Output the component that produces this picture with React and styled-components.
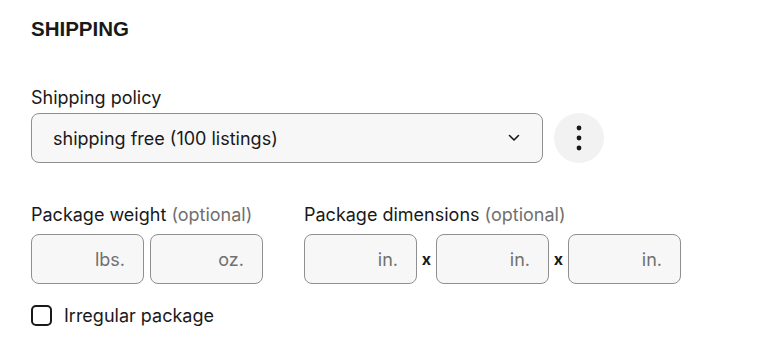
import React from "react";
import styled, { createGlobalStyle } from "styled-components";

const Global = createGlobalStyle`
  html, body { margin: 0; padding: 0; background: #fff; }
  body { font-family: Inter, "Noto Sans", sans-serif; color: #191919; }
  * { box-sizing: border-box; }
`;

const Page = styled.div`
  width: 780px;
  height: 353px;
  padding: 17px 0 0 31px;
  display: flex;
  flex-direction: column;
`;

const Heading = styled.h2`
  margin: 0;
  font-family: "Liberation Sans", Arial, sans-serif;
  font-weight: 700;
  font-size: 20.5px;
  line-height: 24px;
  color: #191919;
`;

const Field = styled.div`
  display: flex;
  flex-direction: column;
  gap: ${(p) => p.$gap || 8}px;
`;

const Label = styled.label`
  font-size: 18px;
  line-height: 22px;
  color: #191919;
`;

const Optional = styled.span`
  color: #707070;
`;

const PolicyRow = styled.div`
  display: flex;
  align-items: center;
  gap: 11px;
`;

const Select = styled.div`
  width: 512px;
  height: 50px;
  border: 1px solid #8f8f8f;
  border-radius: 8px;
  background: #f7f7f7;
  display: flex;
  align-items: center;
  justify-content: space-between;
  padding: 0 22px 0 21px;
  font-size: 18px;
  color: #191919;
`;

const KebabButton = styled.button`
  width: 50px;
  height: 50px;
  border: none;
  border-radius: 50%;
  background: #f2f2f2;
  display: flex;
  align-items: center;
  justify-content: center;
  padding: 0;
`;

const Section = styled.div`
  margin-top: ${(p) => p.$mt}px;
`;

const Groups = styled.div`
  display: flex;
  gap: 41px;
`;

const InputRow = styled.div`
  display: flex;
  align-items: center;
  gap: ${(p) => p.$gap}px;
`;

const Box = styled.div`
  width: 113px;
  height: 50px;
  border: 1px solid #8f8f8f;
  border-radius: 8px;
  background: #f7f7f7;
  display: flex;
  align-items: center;
  justify-content: flex-end;
  padding-right: 18px;
  font-size: 18px;
  color: #707070;
`;

const Times = styled.span`
  font-size: 16px;
  font-weight: 700;
  color: #191919;
  width: 11px;
  text-align: center;
`;

const CheckRow = styled.label`
  display: flex;
  align-items: center;
  gap: 12px;
  font-size: 18px;
  color: #191919;
`;

const CheckBox = styled.span`
  width: 21px;
  height: 21px;
  border: 2px solid #191919;
  border-radius: 5px;
  background: #fff;
`;

const Chevron = () => (
  <svg width="12" height="8" viewBox="0 0 12 8" fill="none">
    <path d="M1.5 1.5 L6 6 L10.5 1.5" stroke="#191919" strokeWidth="1.6" strokeLinecap="round" strokeLinejoin="round" />
  </svg>
);

const Kebab = () => (
  <svg width="6" height="26" viewBox="0 0 6 26">
    <circle cx="3" cy="3" r="2.4" fill="#191919" />
    <circle cx="3" cy="13" r="2.4" fill="#191919" />
    <circle cx="3" cy="23" r="2.4" fill="#191919" />
  </svg>
);

export default function App() {
  return (
    <>
      <Global />
      <Page>
        <Heading>SHIPPING</Heading>
        <Section $mt={46}>
          <Field $gap={4}>
            <Label>Shipping policy</Label>
            <PolicyRow>
              <Select>
                <span>shipping free (100 listings)</span>
                <Chevron />
              </Select>
              <KebabButton aria-label="More">
                <Kebab />
              </KebabButton>
            </PolicyRow>
          </Field>
        </Section>
        <Section $mt={41}>
          <Groups>
            <Field $gap={8}>
              <Label>
                Package weight <Optional>(optional)</Optional>
              </Label>
              <InputRow $gap={6}>
                <Box>lbs.</Box>
                <Box>oz.</Box>
              </InputRow>
            </Field>
            <Field $gap={8}>
              <Label>
                Package dimensions <Optional>(optional)</Optional>
              </Label>
              <InputRow $gap={4}>
                <Box>in.</Box>
                <Times>x</Times>
                <Box>in.</Box>
                <Times>x</Times>
                <Box>in.</Box>
              </InputRow>
            </Field>
          </Groups>
        </Section>
        <Section $mt={21}>
          <CheckRow>
            <CheckBox />
            Irregular package
          </CheckRow>
        </Section>
      </Page>
    </>
  );
}
